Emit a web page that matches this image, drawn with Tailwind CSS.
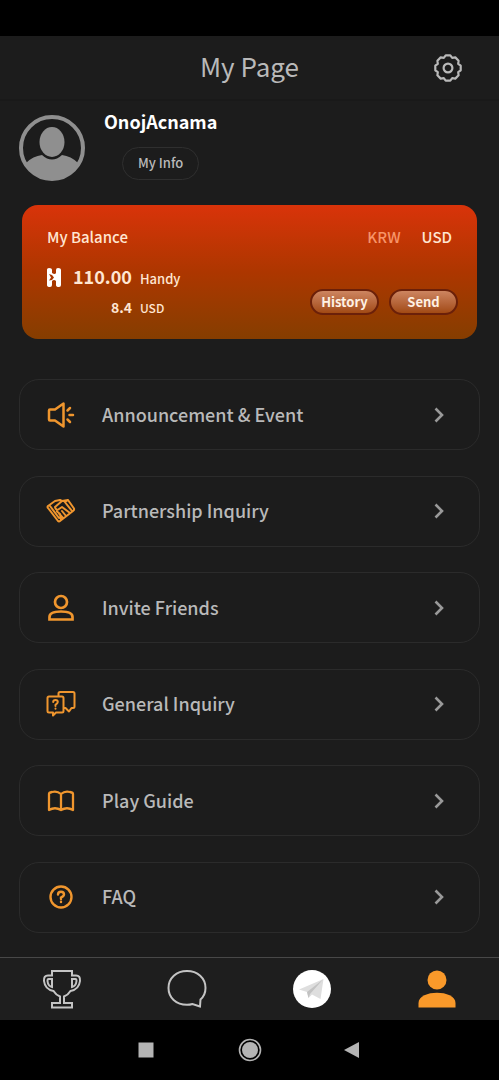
<!DOCTYPE html>
<html lang="en">
<head>
<meta charset="utf-8">
<meta name="viewport" content="width=device-width, initial-scale=1">
<title>My Page</title>
<script src="https://cdn.jsdelivr.net/npm/@tailwindcss/browser@4"></script>
</head>
<body class="flex min-h-screen flex-col bg-[#1c1c1c] font-['Noto_Sans_CJK_KR','Noto_Sans',sans-serif] text-[#b9b9b9]">
  <div class="h-9 shrink-0 bg-black"></div>

  <header class="grid h-[65px] shrink-0 grid-cols-[1fr_auto_1fr] items-center border-b-2 border-[#191919] px-9">
    <h1 class="col-start-2 pb-1 text-[26px] leading-8">My Page</h1>
    <button type="button" aria-label="Settings" class="justify-self-end">
      <svg class="size-[30px]" viewBox="-15 -15 30 30" fill="none" stroke="#b9b9b9" stroke-width="2.200" stroke-linejoin="round">
        <path d="M-4.200-10.200L-2.300-12.700H2.300L4.200-10.200L7.300-10.600L10.600-7.300L10.200-4.200L12.700-2.300V2.300L10.200 4.200L10.600 7.300L7.300 10.600L4.200 10.200L2.300 12.700H-2.300L-4.200 10.200L-7.300 10.600L-10.600 7.300L-10.200 4.200L-12.700 2.300V-2.300L-10.200-4.200L-10.600-7.300L-7.300-10.600Z"/>
        <circle r="4.400"/>
      </svg>
    </button>
  </header>

  <main class="flex flex-1 flex-col">
    <section class="flex gap-[19px] px-[19px] pt-2">
      <svg class="mt-1.5 size-[66px]" viewBox="0 0 66 66" role="img" aria-label="Profile picture">
        <circle cx="33" cy="33" r="31" fill="#1c1c1c" stroke="#8f8f8f" stroke-width="4"/>
        <path d="M7 48Q14 41 23 40Q33 49 43 40Q52 41 59 48Q51 65 33 65Q15 65 7 48Z" fill="#8f8f8f"/>
        <ellipse cx="33" cy="27" rx="14" ry="16.500" fill="#1c1c1c"/>
        <ellipse cx="33" cy="27" rx="12.500" ry="15" fill="#8f8f8f"/>
      </svg>
      <div class="flex flex-col items-start">
        <h2 class="text-[18px] leading-6 font-bold text-white">OnojAcnama</h2>
        <button type="button" class="mt-3.5 ml-[18px] h-[33px] rounded-full border border-[#2f2f2f] px-[15px] pb-0.5 text-[13px] leading-5 font-medium">My Info</button>
      </div>
    </section>

    <section class="mx-[22px] mt-6 flex h-[134px] flex-col rounded-2xl bg-linear-to-b from-[#d9330a] via-[#ad3600] to-[#853d00] pr-[19px] pl-[25px] text-[#ffe6d2]">
      <div class="flex pt-5 pr-1.5 text-[15px] leading-6 font-medium">
        <h3 class="flex-1">My Balance</h3>
        <div class="flex gap-[21px]">
          <button type="button" class="text-[#f79468]">KRW</button>
          <button type="button">USD</button>
        </div>
      </div>
      <div class="flex items-start justify-between">
        <div class="grid grid-cols-[14px_auto_auto] items-baseline gap-x-2 pt-[11px]">
          <svg class="h-[19px] w-3.5 self-center" viewBox="0 0 14 19" fill="#fff">
            <path d="M0 1.500Q0 0 2 0Q5 0 5 2V5Q8 7 9 5V2Q9 0 11 0Q14 0 14 2V17Q14 19 12 19Q9 19 9 17V13Q7 11 5 13V17Q5 19 3 19Q0 19 0 17Z"/>
            <path d="M2 6L5 7L7 9.500L5 12L2 12.500L4 9.500Z" fill="#a93600"/>
          </svg>
          <strong class="pl-1 text-right text-[18px] leading-8 font-bold">110.00</strong>
          <span class="text-[13px] leading-8 font-medium">Handy</span>
          <strong class="col-start-2 text-right text-[14px] leading-6 font-bold">8.4</strong>
          <span class="text-[12px] leading-6 font-medium">USD</span>
        </div>
        <div class="mt-10 flex gap-2.5">
          <button type="button" class="flex h-[26px] w-[69px] items-center justify-center rounded-full border-2 border-[#6b2009] bg-linear-to-b from-[#cd8560] to-[#a24a12] text-[13px] leading-5 font-bold text-[#fff1e4]">History</button>
          <button type="button" class="flex h-[26px] w-[69px] items-center justify-center rounded-full border-2 border-[#6b2009] bg-linear-to-b from-[#cd8560] to-[#a24a12] text-[13px] leading-5 font-bold text-[#fff1e4]">Send</button>
        </div>
      </div>
    </section>

    <nav aria-label="Menu" class="mx-[19px] mt-10 mb-6 flex flex-1 flex-col justify-between gap-4 text-[18px] leading-7 font-medium">
      <a href="#" class="flex h-[71px] items-center rounded-[20px] border border-[#2b2b2b] pr-[34px] pl-[25px]">
        <svg class="mr-[25px] size-8" viewBox="0 0 32 32" fill="none" stroke="#f0962e" stroke-width="2.500" stroke-linecap="round" stroke-linejoin="round">
          <path d="M5 10.500H10L18.500 4.500V27.500L10 21.500H5Q4 21.500 4 20.500V11.500Q4 10.500 5 10.500ZM22.500 11.500L25 9M24.500 16H28M22.500 20.500L25 23"/>
        </svg>
        <span class="flex-1 pb-0.5">Announcement &amp; Event</span>
        <svg class="h-4 w-3" viewBox="0 0 12 16" fill="none" stroke="#999" stroke-width="2.600"><path d="M2.500 1.500L9 8L2.500 14.500"/></svg>
      </a>
      <a href="#" class="flex h-[71px] items-center rounded-[20px] border border-[#2b2b2b] pr-[34px] pl-[25px]">
        <svg class="mr-[25px] size-8" viewBox="0 0 32 32" fill="none" stroke="#f0962e" stroke-width="2" stroke-linecap="round" stroke-linejoin="round">
          <path d="M3 13Q2 12 3 11L10 6L15 5L17 6L23 5L29 13.500Q29.500 15 28 16L15 26Q14 27 13 26ZM5 11L14 23M17 6L10 12Q11 16 14 14L17 12L25 18M19 6L27 16M23 5L20 7M12 16.500L15 19L16 25M17 16L21 21M14 18.500L18 23"/>
        </svg>
        <span class="flex-1 pb-0.5">Partnership Inquiry</span>
        <svg class="h-4 w-3" viewBox="0 0 12 16" fill="none" stroke="#999" stroke-width="2.600"><path d="M2.500 1.500L9 8L2.500 14.500"/></svg>
      </a>
      <a href="#" class="flex h-[71px] items-center rounded-[20px] border border-[#2b2b2b] pr-[34px] pl-[25px]">
        <svg class="mr-[25px] size-8" viewBox="0 0 32 32" fill="none" stroke="#f0962e" stroke-width="2.700" stroke-linejoin="miter">
          <circle cx="16" cy="10" r="6"/><path d="M4.500 27.500V25Q4.500 19.500 16 19.500Q27.500 19.500 27.500 25V27.500Z"/>
        </svg>
        <span class="flex-1 pb-0.5">Invite Friends</span>
        <svg class="h-4 w-3" viewBox="0 0 12 16" fill="none" stroke="#999" stroke-width="2.600"><path d="M2.500 1.500L9 8L2.500 14.500"/></svg>
      </a>
      <a href="#" class="flex h-[71px] items-center rounded-[20px] border border-[#2b2b2b] pr-[34px] pl-[25px]">
        <svg class="mr-[25px] size-8" viewBox="0 0 32 32" fill="none" stroke="#f0962e" stroke-width="2" stroke-linecap="round" stroke-linejoin="round">
          <path d="M4 8.500H17Q18.500 8.500 18.500 10V23Q18.500 24.500 17 24.500H11L8 27.500V24.500H4Q2.500 24.500 2.500 23V10Q2.500 8.500 4 8.500ZM13.500 8V5.500Q13.500 4 15 4H28Q29.500 4 29.500 5.500V18.500Q29.500 20 28 20H26.500L24 23.500L20.500 20H18.500"/>
          <path d="M8.200 14Q8.200 12 10.500 12Q12.800 12 12.800 14Q12.800 15.300 10.500 16.800V18M10.500 20.600V20.800"/>
        </svg>
        <span class="flex-1 pb-0.5">General Inquiry</span>
        <svg class="h-4 w-3" viewBox="0 0 12 16" fill="none" stroke="#999" stroke-width="2.600"><path d="M2.500 1.500L9 8L2.500 14.500"/></svg>
      </a>
      <a href="#" class="flex h-[71px] items-center rounded-[20px] border border-[#2b2b2b] pr-[34px] pl-[25px]">
        <svg class="mr-[25px] size-8" viewBox="0 0 32 32" fill="none" stroke="#f0962e" stroke-width="2.300" stroke-linecap="round" stroke-linejoin="round">
          <path d="M16 9Q12 5.500 7 7Q4 7.500 4 9V25Q10 21.500 16 25Q22 21.500 28 25V9Q28 7.500 25 7Q20 5.500 16 9V24.500"/>
        </svg>
        <span class="flex-1 pb-0.5">Play Guide</span>
        <svg class="h-4 w-3" viewBox="0 0 12 16" fill="none" stroke="#999" stroke-width="2.600"><path d="M2.500 1.500L9 8L2.500 14.500"/></svg>
      </a>
      <a href="#" class="flex h-[71px] items-center rounded-[20px] border border-[#2b2b2b] pr-[34px] pl-[25px]">
        <svg class="mr-[25px] size-8" viewBox="0 0 32 32" fill="none" stroke="#f0962e" stroke-width="2.400" stroke-linecap="round">
          <circle cx="16" cy="16" r="10.500"/><path d="M13 13.500Q13 10.800 16 10.800Q19 10.800 19 13.500Q19 15 16 16.500V18M16 20.800V21"/>
        </svg>
        <span class="flex-1 pb-0.5">FAQ</span>
        <svg class="h-4 w-3" viewBox="0 0 12 16" fill="none" stroke="#999" stroke-width="2.600"><path d="M2.500 1.500L9 8L2.500 14.500"/></svg>
      </a>
    </nav>
  </main>

  <nav aria-label="Main" class="grid h-[63px] shrink-0 grid-cols-4 place-items-center border-t border-[#484848] bg-[#1e1e1e]">
    <a href="#" aria-label="Ranking">
      <svg class="size-10" viewBox="0 0 40 40" fill="none" stroke="#c4c4c4" stroke-width="2">
        <path d="M10 2H30V6.500H34Q38.500 6.500 38 12Q37 20.500 28.500 22Q26 26 22 27.500V34H30V38.500H10V34H18V27.500Q14 26 11.500 22Q3 20.500 2 12Q1.500 6.500 6 6.500H10ZM10 10H6.500Q5.500 10 5.500 12Q6 17 10 18ZM30 10H33.500Q34.500 10 34.500 12Q34 17 30 18Z"/>
      </svg>
    </a>
    <a href="#" aria-label="Chat">
      <svg class="size-10" viewBox="0 0 40 40" fill="none" stroke="#c4c4c4" stroke-width="2">
        <path d="M33 37.500L25.500 35Q23 35.800 20 35.800C9 35.800 1.500 28.500 1.500 19C1.500 9 9.500 2 20 2C30.500 2 38.500 9 38.500 19Q38.500 26 33.500 30.500Z"/>
      </svg>
    </a>
    <a href="#" aria-label="Telegram">
      <svg class="size-10" viewBox="0 0 40 40">
        <circle cx="20" cy="20" r="19" fill="#fff"/>
        <path d="M7 20.500L31.500 10L28.500 30L20 25.500L16.500 29L15 23Z" fill="#dedede"/>
        <path d="M15 23L31 10.500L18 25L16.500 29Z" fill="#c2c2c2"/>
      </svg>
    </a>
    <a href="#" aria-label="My Page" aria-current="page">
      <svg class="size-10" viewBox="0 0 40 40" fill="#f9992a">
        <circle cx="20" cy="11" r="9.500"/><path d="M1.500 38.500V34C1.500 27 11 23.800 20 23.800S38.500 27 38.500 34V38.500Z"/>
      </svg>
    </a>
  </nav>

  <footer class="flex h-[60px] shrink-0 items-center justify-center gap-[78px] bg-black">
    <button type="button" aria-label="Recent apps"><svg class="size-6" viewBox="0 0 24 24"><path d="M2.500 4.500H17.500V19.500H2.500Z" fill="#b4b4b4"/></svg></button>
    <button type="button" aria-label="Home"><svg class="size-6" viewBox="0 0 24 24"><circle cx="12" cy="12" r="10.500" fill="none" stroke="#b4b4b4" stroke-width="1.600"/><circle cx="12" cy="12" r="8" fill="#b4b4b4"/></svg></button>
    <button type="button" aria-label="Back"><svg class="size-6" viewBox="0 0 24 24"><path d="M4 12L19 4V20Z" fill="#b4b4b4"/></svg></button>
  </footer>
</body>
</html>
